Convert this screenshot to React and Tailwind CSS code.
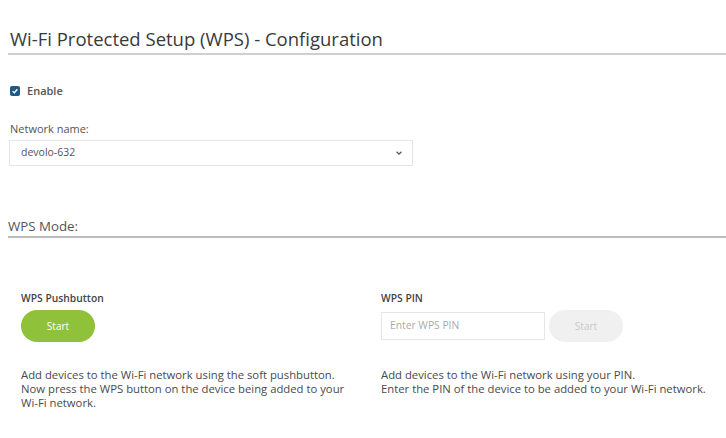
export default function App() {
  return (
    <div className="w-[726px] h-[438px] bg-white text-[#444] overflow-hidden" style={{ fontFamily: '"Open Sans", "Noto Sans", sans-serif' }}>
      <div className="pt-[27px] pl-[8px]">
        <h1 className="pl-[2px] text-[18.5px] leading-[24px] text-[#3a3a3a] font-normal">Wi-Fi Protected Setup (WPS) - Configuration</h1>
        <div className="mt-[2px] h-[2px] bg-[#cfcfcf]" />
      </div>

      <div className="pl-[10px] mt-[28px] flex items-center gap-[7px]">
        <span className="w-[10px] h-[10px] rounded-[2px] bg-[#1e5a88] flex items-center justify-center">
          <svg viewBox="0 0 10 10" className="w-[8px] h-[8px]"><path d="M2 5.2 L4.2 7.2 L8 2.8" fill="none" stroke="white" strokeWidth="1.6" /></svg>
        </span>
        <span className="text-[11px] font-semibold text-[#555]">Enable</span>
      </div>

      <div className="pl-[10px] mt-[21px] text-[11px] text-[#555]">Network name:</div>
      <div className="ml-[9px] mt-[3px] w-[404px] h-[26px] border border-[#e6e6e6] flex items-center justify-between pl-[11px] pr-[9px]">
        <span className="text-[10.5px] text-[#555]">devolo-632</span>
        <svg viewBox="0 0 10 10" className="w-[8px] h-[8px]"><path d="M2 3.5 L5 6.5 L8 3.5" fill="none" stroke="#555" strokeWidth="1.6" /></svg>
      </div>

      <div className="pl-[8px] mt-[51px]">
        <div className="text-[13.3px] leading-[18px] text-[#555]">WPS Mode:</div>
        <div className="mt-[1px] h-[2px] bg-[#bdbdbd]" />
      </div>

      <div className="pl-[21px] mt-[53px] grid grid-cols-[360px_1fr]">
        <div>
          <div className="text-[10.3px] font-semibold text-[#444] leading-[14px]">WPS Pushbutton</div>
          <button className="mt-[5px] w-[74px] h-[32px] rounded-full bg-[#8fc13a] text-white text-[10px]">Start</button>
          <p className="mt-[26px] text-[11.3px] leading-[14px] text-[#4a4a4a]">
            Add devices to the Wi-Fi network using the soft pushbutton.<br />
            Now press the WPS button on the device being added to your<br />
            Wi-Fi network.
          </p>
        </div>
        <div>
          <div className="text-[10.3px] font-semibold text-[#444] leading-[14px]">WPS PIN</div>
          <div className="mt-[5px] flex items-center gap-[4px]">
            <div className="w-[164px] h-[28px] border border-[#e6e6e6] flex items-center pl-[8px] text-[10.3px] text-[#aaa]">Enter WPS PIN</div>
            <button className="w-[74px] h-[32px] rounded-full bg-[#f0f0f0] text-[#c8c8c8] text-[10px]">Start</button>
          </div>
          <p className="mt-[26px] text-[11.3px] leading-[14px] text-[#4a4a4a]">
            Add devices to the Wi-Fi network using your PIN.<br />
            Enter the PIN of the device to be added to your Wi-Fi network.
          </p>
        </div>
      </div>
    </div>
  );
}
